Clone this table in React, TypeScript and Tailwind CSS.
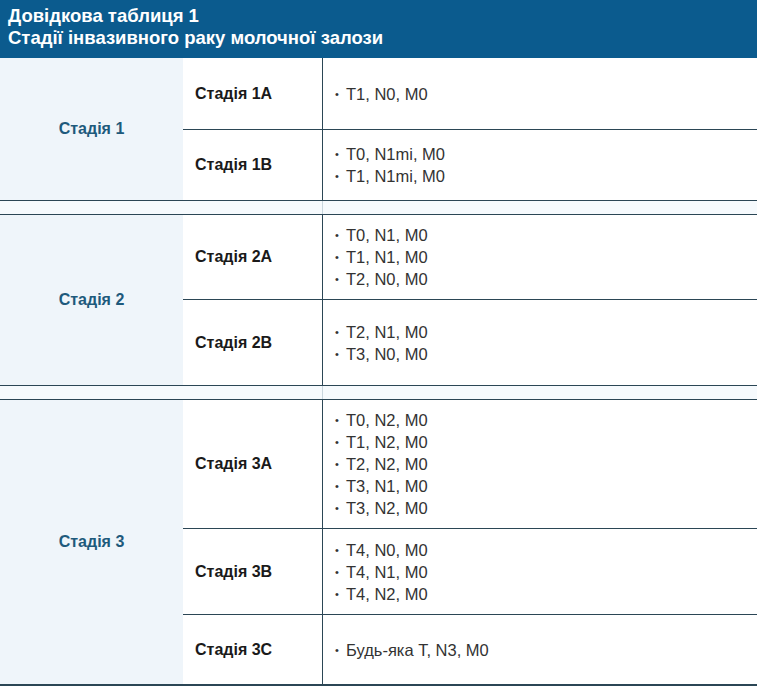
import React from "react";

type Row = { label: string; items: string[]; h: number };
type Section = { label: string; rows: Row[] };

const sections: Section[] = [
  {
    label: "Стадія 1",
    rows: [
      { label: "Стадія 1A", items: ["T1, N0, M0"], h: 71 },
      { label: "Стадія 1B", items: ["T0, N1mi, M0", "T1, N1mi, M0"], h: 71 },
    ],
  },
  {
    label: "Стадія 2",
    rows: [
      { label: "Стадія 2A", items: ["T0, N1, M0", "T1, N1, M0", "T2, N0, M0"], h: 84 },
      { label: "Стадія 2B", items: ["T2, N1, M0", "T3, N0, M0"], h: 86 },
    ],
  },
  {
    label: "Стадія 3",
    rows: [
      {
        label: "Стадія 3A",
        items: ["T0, N2, M0", "T1, N2, M0", "T2, N2, M0", "T3, N1, M0", "T3, N2, M0"],
        h: 128,
      },
      { label: "Стадія 3B", items: ["T4, N0, M0", "T4, N1, M0", "T4, N2, M0"], h: 86 },
      { label: "Стадія 3C", items: ["Будь-яка T, N3, M0"], h: 70 },
    ],
  },
];

export default function App() {
  return (
    <div
      className="w-[757px] h-[686px] bg-white overflow-hidden"
      style={{ fontFamily: '"Liberation Sans", Arial, sans-serif' }}
    >
      <div className="bg-[#0b5b8e] h-[58px] px-[8px] pt-[5px] text-white font-bold text-[18.5px] leading-[22px]">
        <div>Довідкова таблиця 1</div>
        <div>Стадії інвазивного раку молочної залози</div>
      </div>
      {sections.map((s, si) => (
        <div key={si}>
          {si > 0 && (
            <div className="flex h-[15px] bg-[#f6fafd] border-t border-b border-[#2b4655]">
              <div className="w-[323px] border-r border-[#c9d6de]" />
            </div>
          )}
          <div className="flex">
            <div className="w-[183px] bg-[#eff5fa] flex items-center justify-center text-[#1e5a7c] font-bold text-[16px]">
              {s.label}
            </div>
            <div className="flex-1 flex flex-col">
              {s.rows.map((r, ri) => (
                <div
                  key={ri}
                  className={
                    "flex " + (ri > 0 ? "border-t border-[#2b4655]" : "")
                  }
                  style={{ height: r.h }}
                >
                  <div className="w-[140px] border-r border-[#2b4655] flex items-center pl-[12px] font-bold text-[16px] text-[#1a1a1a]">
                    {r.label}
                  </div>
                  <div className="flex-1 flex flex-col justify-center pl-[12px] text-[16.5px] leading-[22px] text-[#333]">
                    {r.items.map((it, ii) => (
                      <div key={ii} className="flex items-center">
                        <span className="w-[11px] text-[11px] leading-[22px]">•</span>
                        <span>{it}</span>
                      </div>
                    ))}
                  </div>
                </div>
              ))}
            </div>
          </div>
        </div>
      ))}
      <div className="border-t-2 border-[#2b4655]" />
    </div>
  );
}
